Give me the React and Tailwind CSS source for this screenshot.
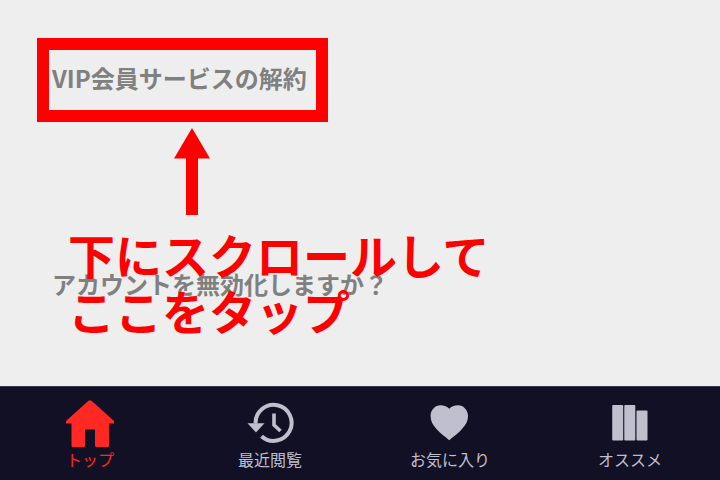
const tabs = [
  { label: 'トップ', icon: HomeIcon, active: true },
  { label: '最近閲覧', icon: HistoryIcon },
  { label: 'お気に入り', icon: HeartIcon },
  { label: 'オススメ', icon: BooksIcon },
];

function HomeIcon() {
  return (
    <svg className="h-12 w-12" viewBox="0 0 48 48" fill="currentColor" aria-hidden="true">
      <path d="M22.500 .8Q24 -.5 25.500 .8L47.200 20.200Q48.600 21.600 48.200 23Q48 23.600 47 23.600H43V45.500Q43 47 41.500 47H30.500Q29 47 29 45.500V29.500H19V45.500Q19 47 17.500 47H7Q5.500 47 5.500 45.500V23.600H1Q0 23.600 -.2 23Q-.6 21.600 .8 20.200Z" />
    </svg>
  );
}

function HistoryIcon() {
  return (
    <svg className="h-12 w-12" viewBox="0 0 48 48" aria-hidden="true">
      <path d="M9.600 23.500A18 18 0 1 1 15.500 36.200" fill="none" stroke="currentColor" strokeWidth="4" />
      <path d="M1.500 23.200H18.500L10 32.500Z" fill="currentColor" />
      <path d="M28 13.500V25L34.500 31" fill="none" stroke="currentColor" strokeWidth="3.600" />
    </svg>
  );
}

function HeartIcon() {
  return (
    <svg className="h-12 w-12" viewBox="0 0 48 48" fill="currentColor" aria-hidden="true">
      <path d="M23.200 40.200C19 36.500 14.500 33.500 10.500 29C6.500 24.500 4.600 21 4.600 16C4.600 10 9 5.200 14.500 5.200C18.200 5.200 21.300 6.400 23.200 8.800C25.100 6.400 28.200 5.200 32 5.200C37.500 5.200 42 10 42 16C42 21 40 24.500 36 29C32 33.500 27.500 36.500 23.200 40.200Z" />
    </svg>
  );
}

function BooksIcon() {
  return (
    <svg className="h-12 w-12" viewBox="0 0 48 48" fill="currentColor" aria-hidden="true">
      <rect x="6.200" y="5" width="11" height="35.500" rx="1" />
      <rect x="18.300" y="5" width="11" height="35.500" rx="1" />
      <rect x="30.500" y="10.500" width="11" height="30" rx="1" />
    </svg>
  );
}

function UpArrow() {
  return (
    <svg className="ml-[174px] mt-[6px] h-[87px] w-9 shrink-0" viewBox="0 0 36 87" fill="#ff0000" aria-hidden="true">
      <path d="M18 0L36 30.500H24V87H12V30.500H0Z" />
    </svg>
  );
}

export default function App() {
  return (
    <div className="flex min-h-screen flex-col bg-[#eeeeee] font-['Noto_Sans_CJK_JP',sans-serif]">
      <main className="flex grow flex-col items-start pt-[38px]">
        <button
          type="button"
          className="ml-[37px] h-[84px] border-12 border-[#ff0000] pr-[9px] pb-1 pl-[3px] text-2xl font-bold whitespace-nowrap text-[#808080]"
        >
          VIP会員サービスの解約
        </button>
        <UpArrow />
        <div className="relative mt-[53px] pl-[52px]">
          <a href="#deactivate" className="block text-2xl font-bold whitespace-nowrap text-[#808080]">
            アカウントを無効化しますか？
          </a>
          <p className="pointer-events-none absolute top-[-42px] left-[68px] text-[47px] leading-[56px] font-bold whitespace-nowrap text-[#ff0000]">
            下にスクロールして
            <br />
            ここをタップ
          </p>
        </div>
      </main>
      <nav className="grid h-[94px] grid-cols-4 border-t border-[#343a46] bg-[#121024]">
        {tabs.map(({ label, icon: Icon, active }) => (
          <a
            key={label}
            href="#"
            aria-current={active ? 'page' : undefined}
            className={`flex flex-col items-center pt-[13px] ${active ? 'text-[#ff2822]' : 'text-[#c0bfcd]'}`}
          >
            <Icon />
            <span className="text-base leading-[22px]">{label}</span>
          </a>
        ))}
      </nav>
    </div>
  );
}
